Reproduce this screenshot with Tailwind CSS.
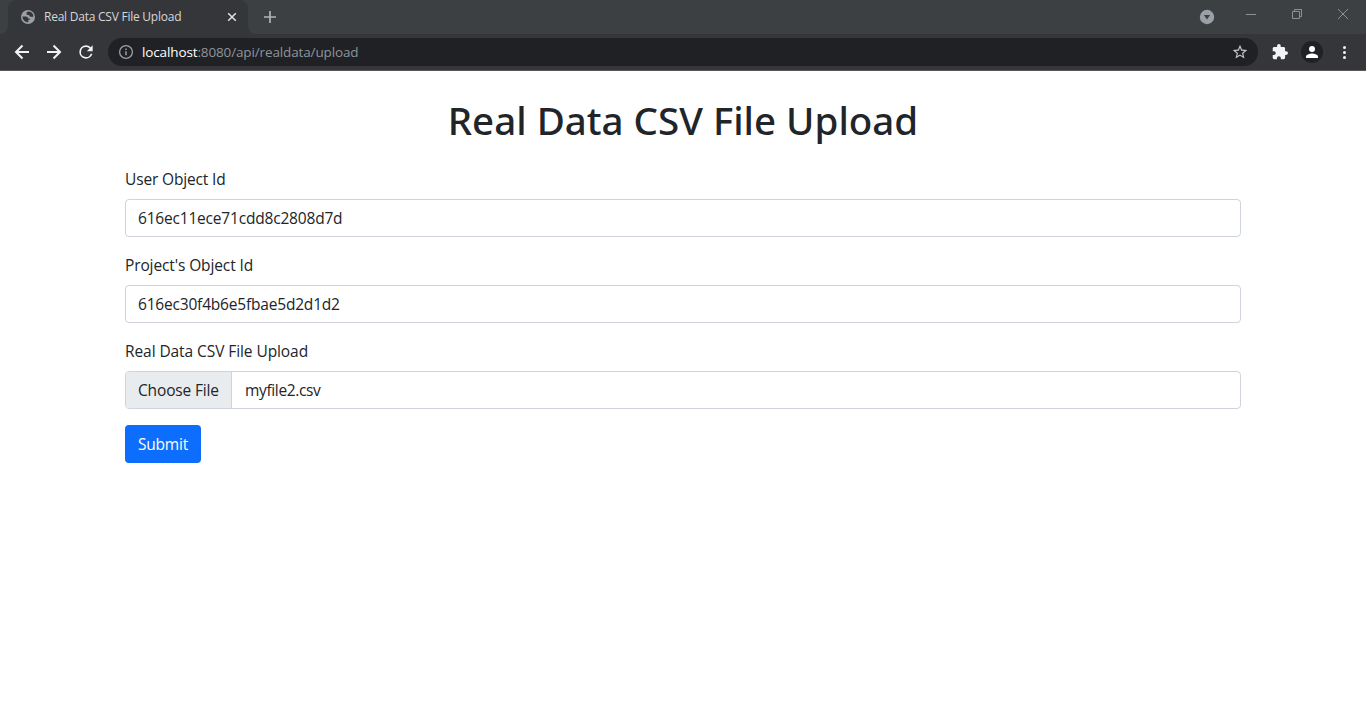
<!DOCTYPE html>
<html lang="en">
<head>
<meta charset="utf-8">
<title>Real Data CSV File Upload</title>
<script src="https://cdn.jsdelivr.net/npm/@tailwindcss/browser@4"></script>
</head>
<body class="h-[703px] overflow-hidden bg-white font-['Open_Sans',sans-serif] text-[#212529]">
<header class="h-[71px] border-b border-[#5b565e] bg-[#35363a]">
  <div class="flex h-[34px] items-start bg-[#3c4043]">
    <div class="h-[34px] w-2 bg-[#35363a]"><div class="h-full rounded-br-lg bg-[#3c4043]"></div></div>
    <div class="flex h-[34px] w-60 items-center rounded-t-lg bg-[#35363a] pl-3 pr-[9px]">
      <svg class="size-4 shrink-0" viewBox="0 0 16 16"><circle cx="8" cy="8" r="7" fill="#9aa0a6"/><path d="M2.500 7.500h3.300c1.500 0 2.200.8 2.200 1.900h1.600v1.600H8.300v2.300c-3.200.1-5.800-2.400-5.800-5.800zM8.500 2.600c-1.700.2-2.200 1.300-2 2.300.2.800 1 1 2 1.100.9.200 1 1.500 2 1.700h2.700c.6-2.300-1.500-5-4.700-5.100z" fill="#35363a"/></svg>
      <span class="ml-2 flex-1 whitespace-nowrap text-[12px] leading-4 tracking-[-0.24px] text-[#d5d7db]">Real Data CSV File Upload</span>
      <svg class="size-3.5" viewBox="0 0 14 14" stroke="#dfe1e5" stroke-width="1.500"><path d="M3.200 3.200l7.600 7.600M10.800 3.200l-7.600 7.600"/></svg>
    </div>
    <div class="h-[34px] w-2 bg-[#35363a]"><div class="h-full rounded-bl-lg bg-[#3c4043]"></div></div>
    <svg class="ml-1.5 mt-[9px] size-4" viewBox="0 0 16 16" stroke="#b0b4b8" stroke-width="1.700"><path d="M2 8h12M8 2v12"/></svg>
    <div class="flex-1"></div>
    <svg class="mt-[9px] size-4" viewBox="0 0 16 16"><circle cx="8" cy="8" r="7.200" fill="#9aa0a6"/><path d="M4.900 6h6.200L8 10.500z" fill="#3c4043"/></svg>
    <svg class="ml-[30px] mt-[9px] h-3 w-3" viewBox="0 0 12 12" stroke="#8d9092"><path d="M1 5.500h10"/></svg>
    <svg class="ml-[34px] mt-[8px] size-3" viewBox="0 0 12 12" fill="none" stroke="#8d9092"><path d="M1.500 3.500h7v7h-7zM3.500 3.500v-2h7v7h-2"/></svg>
    <svg class="ml-[34px] mr-[17px] mt-[8px] size-3" viewBox="0 0 12 12" stroke="#8d9092"><path d="M1 1l10 10M11 1L1 11"/></svg>
  </div>
  <div class="flex h-9 items-center pl-3 pr-3">
    <svg class="size-5" viewBox="0 0 20 20" fill="none" stroke="#f1f3f4" stroke-width="2"><path d="M17 10H4M10.500 3.500L4 10l6.500 6.500"/></svg>
    <svg class="ml-3 size-5" viewBox="0 0 20 20" fill="none" stroke="#f1f3f4" stroke-width="2"><path d="M3 10h13M9.500 3.500L16 10l-6.500 6.500"/></svg>
    <svg class="ml-3 size-5" viewBox="0 0 24 24" fill="#f1f3f4"><path d="M17.650 6.350A7.958 7.958 0 0 0 12 4a8 8 0 1 0 7.730 10h-2.080A6 6 0 1 1 12 6c1.660 0 3.140.69 4.220 1.780L13 11h7V4z"/></svg>
    <div class="ml-3 flex h-7 w-[1150px] items-center rounded-full bg-[#202124] px-2.5">
      <svg class="size-4" viewBox="0 0 16 16" fill="none" stroke="#9aa0a6" stroke-width="1.300"><circle cx="8" cy="8" r="6.400"/><path d="M8 7.200v4M8 4.500V6" stroke-width="1.500"/></svg>
      <span class="ml-2 flex-1 whitespace-nowrap text-[13.500px] leading-5 tracking-[-0.13px] text-[#8f9499]"><span class="text-white">localhost</span>:8080/api/realdata/upload</span>
      <svg class="size-4" viewBox="1 1 22 22" fill="#c4c7cb"><path d="M22 9.240l-7.190-.62L12 2 9.190 8.630 2 9.240l5.460 4.730L5.820 21 12 17.270 18.180 21l-1.630-7.030zM12 15.400l-3.760 2.270 1-4.280-3.320-2.880 4.380-.38L12 6.100l1.710 4.040 4.380.38-3.320 2.880 1 4.280z"/></svg>
    </div>
    <svg class="ml-[14px] size-4" viewBox="1 1 22 22" fill="#f1f3f4"><path d="M20.500 11H19V7c0-1.100-.9-2-2-2h-4V3.500a2.500 2.500 0 0 0-5 0V5H4c-1.100 0-2 .9-2 2v3.800h1.500a2.700 2.700 0 0 1 0 5.400H2V20c0 1.100.9 2 2 2h3.800v-1.500a2.700 2.700 0 0 1 5.400 0V22H17c1.100 0 2-.9 2-2v-4h1.500a2.500 2.500 0 0 0 0-5z"/></svg>
    <svg class="ml-[13px] size-[22px]" viewBox="0 0 22 22"><circle cx="11" cy="11" r="11" fill="#202124"/><circle cx="11" cy="8" r="3" fill="#fff"/><path d="M5 17v-1.500c0-2 4-3 6-3s6 1 6 3V17z" fill="#fff"/></svg>
    <svg class="ml-[13px] size-4" viewBox="0 0 16 16" fill="#f1f3f4"><circle cx="8.500" cy="3.500" r="1.500"/><circle cx="8.500" cy="8.500" r="1.500"/><circle cx="8.500" cy="13.500" r="1.500"/></svg>
  </div>
</header>
<main class="mx-auto w-[1116px] pt-[23px] text-[15.500px] leading-6">
  <h1 class="text-center font-['Noto_Sans',sans-serif] text-[38.500px] font-medium leading-[52px]">Real Data CSV File Upload</h1>
  <form class="mt-[21px]">
    <label class="block tracking-[-0.15px]">User Object Id</label>
    <div class="mt-2 h-[38px] rounded border border-[#ced4da] px-3 py-1.5 tracking-[-0.19px]">616ec11ece71cdd8c2808d7d</div>
    <label class="mt-4 block tracking-[-0.12px]">Project's Object Id</label>
    <div class="mt-2 h-[38px] rounded border border-[#ced4da] px-3 py-1.5 tracking-[-0.19px]">616ec30f4b6e5fbae5d2d1d2</div>
    <label class="mt-4 block tracking-[-0.08px]">Real Data CSV File Upload</label>
    <div class="mt-2 flex h-[38px] overflow-hidden rounded border border-[#ced4da]">
      <div class="w-[106px] whitespace-nowrap border-r border-[#ced4da] bg-[#e9ecef] px-3 py-1.5 tracking-[-0.15px]">Choose File</div>
      <div class="px-[13px] py-1.5 tracking-[-0.35px]">myfile2.csv</div>
    </div>
    <button type="button" class="mt-4 block h-[38px] w-[76px] rounded bg-[#0d6efd] tracking-[-0.2px] text-white">Submit</button>
  </form>
</main>
</body>
</html>
